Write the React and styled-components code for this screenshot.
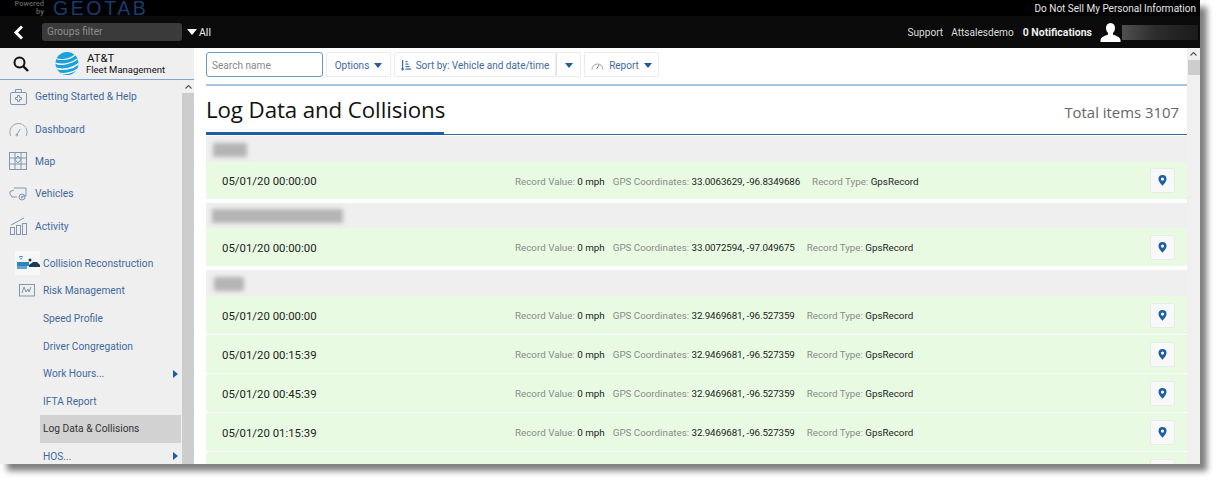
import React from "react";
import styled, { createGlobalStyle } from "styled-components";

const Global = createGlobalStyle`
  html, body { margin: 0; padding: 0; background: #fff; }
  body { font-family: Roboto, "Open Sans", "Liberation Sans", sans-serif; width: 1218px; height: 482px; overflow: hidden; }
  * { box-sizing: border-box; }
`;

const Frame = styled.div`
  width: 1200px; height: 464px; display: flex; flex-direction: column; overflow: hidden; background: #fff;
  box-shadow: 7px 7px 6px rgba(0,0,0,.5);
`;
const TopStrip = styled.div`
  height: 16px; flex: none; background: #000; display: flex; align-items: center; justify-content: space-between; padding: 0 4px 0 11px;
`;
const Powered = styled.div`
  display: flex; align-items: center; gap: 9px;
`;
const PoweredText = styled.div`
  font-size: 7.5px; line-height: 8px; font-weight: 700; color: #55585c; text-align: right; width: 33px;
`;
const GeoLogo = styled.div`
  font-family: "Liberation Sans", sans-serif; font-size: 19.5px; letter-spacing: 2.6px; color: #163c6e; line-height: 16px;
`;
const Dnsl = styled.div`
  font-size: 10px; color: #e6e6e6;
`;
const HeaderBar = styled.div`
  height: 32px; flex: none; background: #0b0b0b; display: flex; align-items: center; padding: 0 2px 0 13px; color: #fff;
`;
const Filter = styled.div`
  width: 140px; height: 18px; margin-left: 18px; background: #3a3a3a; border-radius: 3px; color: #8e8e8e; font-size: 10.2px; line-height: 18px; padding-left: 5px;
`;
const AllLabel = styled.div`
  display: flex; align-items: center; gap: 2px; margin-left: 5px; font-size: 10.5px; color: #eee;
`;
const HeaderRight = styled.div`
  margin-left: auto; display: flex; align-items: center; font-size: 10.1px; color: #ddd;
`;
const Notif = styled.span`
  font-weight: 700; color: #eee; margin-left: 9px; margin-right: 8px; font-size: 10.5px;
`;
const Attsales = styled.span` margin-left: 8px; `;
const UserBlur = styled.div`
  width: 76px; height: 15px; margin-left: 1px; background: linear-gradient(90deg, #505050, #2c2c2c 45%, #1b1b1b);
`;
const Body = styled.div`
  flex: 1; min-height: 0; display: flex;
`;
const Side = styled.aside`
  width: 194px; flex: none; display: flex; flex-direction: column; background: #efefef;
`;
const SideTop = styled.div`
  height: 32px; flex: none; border-bottom: 1px solid #7ea6cf; display: flex; align-items: center; padding-left: 13px;
`;
const LogoGap = styled.span` width: 26px; flex: none; `;
const LogoText = styled.div`
  margin-left: 7px; color: #111; display: flex; flex-direction: column; line-height: 11px;
`;
const LogoMain = styled.span` font-size: 11.4px; margin-left: 1px; `;
const LogoSub = styled.span` font-size: 9.5px; `;
const SideBody = styled.div`
  flex: 1; min-height: 0; display: flex; overflow: hidden;
`;
const Nav = styled.nav`
  flex: 1; min-width: 0; display: flex; flex-direction: column; padding-top: .5px;
`;
const SideBar = styled.div`
  width: 12px; flex: none; background: #cdcdcd; display: flex; flex-direction: column;
`;
const ArrowCell = styled.div`
  height: ${p => p.$h || 13}px; background: #f0f0f0; display: flex; align-items: center; justify-content: center; flex: none;
`;
const TopItem = styled.div`
  height: 32.4px; display: flex; align-items: center; padding-left: 9px; gap: 7px; color: #3f6a9e; font-size: 10.3px; flex: none;
`;
const TopIcon = styled.div`
  width: 19px; height: 20px; display: flex; align-items: center; justify-content: center; flex: none;
`;
const SubItem = styled.div`
  height: 27.6px; flex: none; display: flex; align-items: center; margin-left: 40px; margin-right: 1px; padding: 0 3px; font-size: 10.2px; justify-content: space-between;
  color: ${p => p.$active ? "#333" : "#3f6a9e"};
  background: ${p => p.$active ? "#d2d2d2" : "transparent"};
`;
const SubIconRow = styled(SubItem)`
  margin-left: 15px; margin-top: ${p => p.$mt || 0}px; padding: 0; justify-content: flex-start; gap: 3px;
`;
const SubIcon = styled.div`
  width: 25px; height: 24px; display: flex; align-items: center; justify-content: center; flex: none;
  background: ${p => p.$light ? "#f7f7f7" : "transparent"};
`;
const Tri = styled.span`
  width: 0; height: 0; border-top: 4px solid transparent; border-bottom: 4px solid transparent; border-left: 5px solid #215d9f;
`;
const Main = styled.main`
  flex: 1; min-width: 0; display: flex;
`;
const Content = styled.div`
  flex: 1; min-width: 0; padding: 4px 0 0 12px; display: flex; flex-direction: column; overflow: hidden;
`;
const Toolbar = styled.div`
  height: 32px; flex: none; display: flex; align-items: flex-start; gap: 3px;
`;
const Search = styled.div`
  width: 117px; height: 25px; border: 1px solid #6b95c4; border-radius: 3px; font-size: 10.1px; color: #888; padding: 1px 0 0 5px; line-height: 23px; flex: none;
`;
const ToolBtn = styled.div`
  width: ${p => p.$w}px; height: 25px; border: 1px solid #ebebeb; border-radius: 2px; display: flex; align-items: center; justify-content: center; gap: 5px; color: #3f6a9e; font-size: 10px; padding-top: 1px; flex: none;
`;
const SplitArrow = styled(ToolBtn)`
  margin-left: -3px; border-left-color: #dedede;
`;
const Caret = styled.span`
  width: 0; height: 0; border-left: ${p => p.$s || 4.5}px solid transparent; border-right: ${p => p.$s || 4.5}px solid transparent; border-top: ${p => p.$t || 5}px solid ${p => p.$c || "#215d9f"}; display: inline-block; flex: none;
`;
const RuleTop = styled.div`
  height: 2px; background: #a9c4dc; flex: none;
`;
const TitleRow = styled.div`
  height: 49px; flex: none; display: flex; align-items: center; justify-content: space-between; padding-right: 8px; border-bottom: 1px solid #2f6aa8; position: relative;
  font-family: "Open Sans", sans-serif;
`;
const Title = styled.h1`
  margin: 0; font-weight: 400; font-size: 22.3px; color: #111; padding-bottom: 1px; letter-spacing: -.1px;
`;
const TitleAccent = styled.div`
  position: absolute; left: 0; bottom: -1px; width: 238px; height: 3px; background: #1f5ea6;
`;
const Total = styled.div`
  font-size: 14.9px; color: #666; padding-top: 4px;
`;
const Group = styled.section`
  flex: none; margin-top: ${p => p.$mt}px;
`;
const GroupHead = styled.div`
  height: ${p => p.$h}px; background: #efefef; display: flex; align-items: center; padding-left: ${p => p.$pl}px; padding-top: 1px; overflow: hidden;
`;
const Smudge = styled.div`
  width: ${p => p.$w}px; height: 14px; background: #b4b4b4; filter: blur(2px);
`;
const Row = styled.div`
  height: ${p => p.$h || 38}px; margin-bottom: ${p => p.$mb ?? 1}px; background: #e8fbe2; display: flex; align-items: center; padding: 0 12px 0 16px;
`;
const DateCell = styled.div`
  width: 293px; flex: none; font-size: 11.4px; color: #222; padding-top: 1.500px;
`;
const Details = styled.div`
  display: flex; font-size: 9.8px; color: #222; white-space: nowrap; padding-top: 1.500px;
`;
const Field = styled.span`
  margin-right: ${p => p.$mr || 8}px;
`;
const Key = styled.span` color: #8a8a8a; `;
const Coord = styled.span` letter-spacing: -.12px; `;
const PinBtn = styled.div`
  margin-left: auto; width: 25px; height: 25px; background: #f8f8f8; border: 1px solid #e8ebe8; border-radius: 2px; display: flex; align-items: center; justify-content: center; flex: none;
`;
const VScroll = styled.div`
  width: 13px; flex: none; background: #f0f0f0; display: flex; flex-direction: column; align-items: stretch;
`;
const VThumb = styled.div`
  height: 15px; background: #cdcdcd; margin-left: 1px;
`;

const Up = () => (
  <svg width="9" height="6" viewBox="0 0 9 6"><path d="M1.5 4.5 4.5 1.5 7.5 4.5" fill="none" stroke="#555" strokeWidth="1.1" /></svg>
);
const Pin = () => (
  <svg width="9" height="11" viewBox="0 0 9 11"><path fillRule="evenodd" d="M4.5 0A4 4 0 0 0 .5 4c0 2.6 3 5.6 4 6.800 1-1.200 4-4.200 4-6.800a4 4 0 0 0-4-4Zm0 2.500a1.600 1.600 0 1 1 0 3.200 1.600 1.600 0 0 1 0-3.200Z" fill="#1f5ea6" /></svg>
);
const Att = () => (
  <svg width="24" height="25" viewBox="0 0 24 25">
    <defs><clipPath id="g"><circle cx="12" cy="12.500" r="11.500" /></clipPath></defs>
    <circle cx="12" cy="12.500" r="11.500" fill="#1ba1dc" />
    <g clipPath="url(#g)" fill="none" stroke="#fff">
      <path d="M-1 6.500C5 10 15 9 22 2.500" strokeWidth="1.100" />
      <path d="M-1 11.500C6 15 17 13 25 6" strokeWidth="1.400" />
      <path d="M-1 16.500C7 20 18 18 25 11.500" strokeWidth="1.600" />
      <path d="M2 21.500C9 24 18 22 25 16.500" strokeWidth="1.300" />
    </g>
  </svg>
);
const I = { fill: "none", stroke: "#7f97b3", strokeWidth: 1 };
const Kit = () => (<svg width="19" height="18" viewBox="0 0 19 18"><g {...I}><rect x="1.500" y="4.500" width="16" height="12" rx="1.500" /><path d="M6.500 4.500V1.500h6v3" /><path d="M8.500 7.500h2v2h2v2h-2v2h-2v-2h-2v-2h2Z" /></g></svg>);
const Gauge = () => (<svg width="22" height="18" viewBox="0 0 22 18"><g {...I}><path d="M2 17a10 10 0 1 1 18 0" strokeDasharray="24 1 4 1" /><path d="M9 16 13 9" /><circle cx="9" cy="16" r="1" /></g></svg>);
const MapI = () => (<svg width="19" height="18" viewBox="0 0 19 18"><g {...I}><rect x=".5" y=".5" width="17" height="17" /><path d="M.5 6h17M.5 12h17M6 .5v17M12 .5v17" /><path d="M6 7.500 9 4l3 3.500L9 11Z" /></g></svg>);
const Truck = () => (<svg width="19" height="14" viewBox="0 0 19 14"><g {...I}><path d="M5 1h12v8h-3M8 10H3L1 7V4.500L5 3" /><circle cx="13" cy="10" r="3" /><circle cx="13" cy="10" r="1" /></g></svg>);
const Bars = () => (<svg width="18" height="18" viewBox="0 0 18 18"><g {...I}><rect x=".5" y="10.500" width="4" height="7" /><rect x="6.500" y="8.500" width="4" height="9" /><rect x="12.500" y="6.500" width="4" height="11" /><path d="M1 8 14 1" /></g></svg>);
const Risk = () => (<svg width="17" height="13" viewBox="0 0 17 13"><g {...I}><rect x=".5" y=".5" width="15" height="11.500" /><path d="M3 9l2-6 2 5 2-3 1 3 2-5" /></g></svg>);
const Coll = () => (<svg width="24" height="15" viewBox="0 0 24 15"><path d="M1 6h12v4H1Z" fill="#2f84bd" /><path d="M1 10h10v3H1Z" fill="#5aa6d3" /><path d="M3 1a4 4 0 0 1 4 0M4 3a2 2 0 0 1 2 0" stroke="#2f84bd" fill="none" /><path d="M13 9l4-3h4l3 3v2H13Z" fill="#1e3a55" /><circle cx="14" cy="4" r="1.500" fill="#1e3a55" /></svg>);
const Speed = () => (<svg width="13" height="9" viewBox="0 0 13 9"><g fill="none" stroke="#9a9a9a"><path d="M1 8.500a5.500 5.500 0 1 1 11 0" /><path d="M5.500 8 8 4" stroke="#7a7a7a" /></g></svg>);
const SortI = () => (<svg width="10" height="11" viewBox="0 0 10 11"><g fill="#3f6a9e"><path d="M1 0h1.200v8.500H3.500L1.600 11-.2 8.500H1Z" /><rect x="4.500" y="1" width="2" height="1.200" /><rect x="4.500" y="3.500" width="3" height="1.200" /><rect x="4.500" y="6" width="4" height="1.200" /><rect x="4.500" y="8.500" width="5.500" height="1.200" /></g></svg>);

const topItems = [["Getting Started & Help", Kit], ["Dashboard", Gauge], ["Map", MapI], ["Vehicles", Truck], ["Activity", Bars]];
const subItems = [["Speed Profile"], ["Driver Congregation"], ["Work Hours...", 0, 1], ["IFTA Report"], ["Log Data & Collisions", 1], ["HOS...", 0, 1]];

const Rec = ({ time, coord, h, mb }) => (
  <Row $h={h} $mb={mb}>
    <DateCell>{time}</DateCell>
    <Details>
      <Field><Key>Record Value: </Key>0 mph</Field>
      <Field $mr={12}><Key>GPS Coordinates: </Key><Coord>{coord}</Coord></Field>
      <Field><Key>Record Type: </Key>GpsRecord</Field>
    </Details>
    <PinBtn><Pin /></PinBtn>
  </Row>
);

export default function App() {
  const c3 = "32.9469681, -96.527359";
  return (
    <Frame>
      <Global />
      <TopStrip>
        <Powered>
          <PoweredText>Powered by</PoweredText>
          <GeoLogo>GEOTAB</GeoLogo>
        </Powered>
        <Dnsl>Do Not Sell My Personal Information</Dnsl>
      </TopStrip>
      <HeaderBar>
        <svg width="11" height="15" viewBox="0 0 11 15"><path d="M9 1.500 3 7.500l6 6" fill="none" stroke="#fff" strokeWidth="3" /></svg>
        <Filter>Groups filter</Filter>
        <AllLabel><Caret $c="#fff" $s={5.5} $t={6} />All</AllLabel>
        <HeaderRight>
          <span>Support</span>
          <Attsales>Attsalesdemo</Attsales>
          <Notif>0 Notifications</Notif>
          <svg width="21" height="19" viewBox="0 0 21 19"><path d="M10.500 0c3 0 4.500 2.200 4.500 5 0 2.200-1 4-2 5v1.500c2 1.200 7 2 7.500 5.500v2H.5v-2c.5-3.500 5.500-4.300 7.500-5.500V10c-1-1-2-2.800-2-5 0-2.800 1.500-5 4.500-5Z" fill="#fff" /></svg>
          <UserBlur />
        </HeaderRight>
      </HeaderBar>
      <Body>
        <Side>
          <SideTop>
            <svg width="16" height="16" viewBox="0 0 16 16"><circle cx="6.500" cy="6.500" r="5" fill="none" stroke="#111" strokeWidth="2" /><path d="m10 10 5 5" stroke="#111" strokeWidth="2.400" /></svg>
            <LogoGap />
            <Att />
            <LogoText><LogoMain>AT&amp;T</LogoMain><LogoSub>Fleet Management</LogoSub></LogoText>
          </SideTop>
          <SideBody>
            <Nav>
              {topItems.map(([t, Ic]) => (
                <TopItem key={t}><TopIcon><Ic /></TopIcon>{t}</TopItem>
              ))}
              <SubIconRow $mt={7}><SubIcon $light><Coll /></SubIcon>Collision Reconstruction</SubIconRow>
              <SubIconRow><SubIcon><Risk /></SubIcon>Risk Management</SubIconRow>
              {subItems.map(([t, a, m]) => (
                <SubItem key={t} $active={a}>{t}{m ? <Tri /> : null}</SubItem>
              ))}
            </Nav>
            <SideBar><ArrowCell><Up /></ArrowCell></SideBar>
          </SideBody>
        </Side>
        <Main>
          <Content>
            <Toolbar>
              <Search>Search name</Search>
              <ToolBtn $w={65}>Options <Caret /></ToolBtn>
              <ToolBtn $w={162}><SortI />Sort by: Vehicle and date/time</ToolBtn>
              <SplitArrow $w={25}><Caret /></SplitArrow>
              <ToolBtn $w={75}><Speed />Report <Caret /></ToolBtn>
            </Toolbar>
            <RuleTop />
            <TitleRow>
              <Title>Log Data and Collisions</Title>
              <TitleAccent />
              <Total>Total items 3107</Total>
            </TitleRow>
            <Group $mt={1}>
              <GroupHead $h={26} $pl={7}><Smudge $w={34} /></GroupHead>
              <Rec time="05/01/20 00:00:00" coord="33.0063629, -96.8349686" h={37} mb={0} />
            </Group>
            <Group $mt={4}>
              <GroupHead $h={25} $pl={6}><Smudge $w={131} /></GroupHead>
              <Rec time="05/01/20 00:00:00" coord="33.0072594, -97.049675" h={38} mb={0} />
            </Group>
            <Group $mt={4}>
              <GroupHead $h={26} $pl={8}><Smudge $w={30} /></GroupHead>
              <Rec time="05/01/20 00:00:00" coord={c3} />
              <Rec time="05/01/20 00:15:39" coord={c3} />
              <Rec time="05/01/20 00:45:39" coord={c3} />
              <Rec time="05/01/20 01:15:39" coord={c3} />
              <Row><PinBtn /></Row>
            </Group>
          </Content>
          <VScroll>
            <ArrowCell $h={12}><Up /></ArrowCell>
            <VThumb />
          </VScroll>
        </Main>
      </Body>
    </Frame>
  );
}
